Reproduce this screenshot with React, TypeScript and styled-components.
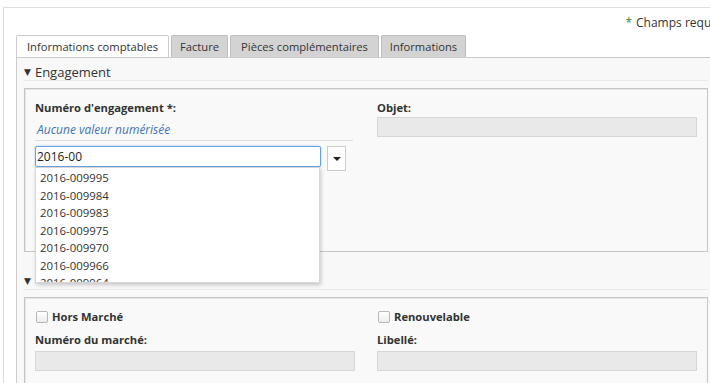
import styled, { createGlobalStyle } from 'styled-components';

const GlobalStyle = createGlobalStyle`
  html, body {
    margin: 0;
    padding: 0;
    background: #ffffff;
    overflow: hidden;
  }
  body {
    font-family: 'Open Sans', 'DejaVu Sans', sans-serif;
    color: #333333;
  }
`;

const Frame = styled.div`
  margin: 7px 0 0 3px;
  width: 740px;
  height: 376px;
  border-top: 1px solid #dddddd;
  border-left: 1px solid #dddddd;
  box-sizing: border-box;
  overflow: hidden;
`;

const TopBar = styled.div`
  height: 27px;
  display: flex;
  align-items: flex-end;
  justify-content: flex-end;
  padding-right: 23px;
  font-size: 12px;
  line-height: 25px;
`;

const Star = styled.span`
  color: #2e8b2e;
  margin-right: 4px;
`;

const TabBar = styled.div`
  display: flex;
  gap: 2px;
  padding-left: 12px;
  height: 22px;
  align-items: flex-end;
`;

const Tab = styled.div<{ active?: boolean; width: number }>`
  width: ${({ width }) => width}px;
  height: 22px;
  box-sizing: border-box;
  text-align: center;
  white-space: nowrap;
  font-size: 11.2px;
  line-height: 21px;
  color: #333333;
  border: 1px solid ${({ active }) => (active ? '#cccccc' : '#bdbdbd')};
  border-bottom: none;
  border-radius: 2px 2px 0 0;
  background: ${({ active }) => (active ? '#ffffff' : '#d3d3d3')};
`;

const Panel = styled.div`
  margin-left: 12px;
  border-top: 1px solid #cccccc;
  border-left: 1px solid #cccccc;
  background: #f8f8f8;
  padding: 0 0 0 7px;
  height: 340px;
`;

const SectionHeader = styled.div<{ spaced?: boolean }>`
  width: 684px;
  margin-top: ${({ spaced }) => (spaced ? '15px' : '0')};
  height: 23px;
  box-sizing: border-box;
  padding-top: 5px;
  display: flex;
  align-items: center;
  gap: 4px;
  font-size: 13px;
  color: #333333;
  border-bottom: 1px solid #e9e9e9;
`;

const Arrow = styled.span`
  font-size: 9px;
  color: #333333;
  line-height: 1;
`;

const Fieldset = styled.div<{ height: number }>`
  margin-top: 7px;
  width: 684px;
  height: ${({ height }) => height}px;
  box-sizing: border-box;
  border: 1px solid #c6c6c6;
  box-shadow: inset 1px 1px 0 #e6e6e6;
  background: #f9f9f9;
  padding: 11px 10px 0 10px;
  display: grid;
  grid-template-columns: 320px 320px;
  column-gap: 22px;
  align-content: start;
`;

const Column = styled.div`
  display: flex;
  flex-direction: column;
  position: relative;
`;

const Label = styled.div<{ gap?: number }>`
  margin-top: ${({ gap }) => gap ?? 0}px;
  font-size: 11.2px;
  font-weight: 700;
  line-height: 16px;
  color: #333333;
`;

const Note = styled.div`
  margin-top: 6px;
  width: 318px;
  padding: 0 0 2px 2px;
  box-sizing: border-box;
  font-size: 12px;
  font-style: italic;
  line-height: 16px;
  color: #3d74b8;
  border-bottom: 1px solid #dddddd;
`;

const InputRow = styled.div`
  margin-top: 5px;
  display: flex;
  align-items: flex-start;
  gap: 6px;
  position: relative;
`;

const TextInput = styled.div`
  width: 286px;
  height: 21px;
  box-sizing: border-box;
  border: 1px solid #6aa2e0;
  box-shadow: 0 0 2px #8fbcef;
  border-radius: 2px;
  background: #ffffff;
  font-size: 12px;
  line-height: 19px;
  padding-left: 1px;
  color: #222222;
`;

const DropButton = styled.div`
  width: 19px;
  height: 25px;
  box-sizing: border-box;
  border: 1px solid #cccccc;
  background: #ffffff;
  display: flex;
  align-items: center;
  justify-content: center;
`;

const Caret = styled.span`
  width: 0;
  height: 0;
  border-left: 4px solid transparent;
  border-right: 4px solid transparent;
  border-top: 4px solid #222222;
`;

const Suggestions = styled.ul`
  position: absolute;
  top: 21px;
  left: 0;
  width: 285px;
  height: 116px;
  margin: 0;
  padding: 1px 0 0 0;
  list-style: none;
  overflow: hidden;
  background: #ffffff;
  border: 1px solid #d6d6d6;
  box-shadow: 1px 2px 4px rgba(0, 0, 0, 0.2);
  box-sizing: border-box;
  z-index: 2;
`;

const Suggestion = styled.li`
  font-size: 11.4px;
  line-height: 17.5px;
  padding-left: 4px;
  color: #333333;
`;

const ReadOnly = styled.div<{ gap?: number }>`
  margin-top: ${({ gap }) => gap ?? 1}px;
  width: 320px;
  height: 20px;
  box-sizing: border-box;
  border: 1px solid #d6d6d6;
  background: #e9e9e9;
`;

const CheckRow = styled.label`
  display: flex;
  align-items: center;
  gap: 4px;
  font-size: 11.2px;
  font-weight: 700;
  line-height: 16px;
  margin-left: 1px;
`;

const Check = styled.span`
  width: 10px;
  height: 10px;
  border: 1px solid #b8b8b8;
  border-radius: 2px;
  background: linear-gradient(#ffffff, #ececec);
`;

const tabs = [
  { label: 'Informations comptables', width: 153 },
  { label: 'Facture', width: 57 },
  { label: 'Pièces complémentaires', width: 149 },
  { label: 'Informations', width: 85 },
];

const codes = [
  '2016-009995',
  '2016-009984',
  '2016-009983',
  '2016-009975',
  '2016-009970',
  '2016-009966',
  '2016-009964',
];

export default function App() {
  return (
    <>
      <GlobalStyle />
      <Frame>
        <TopBar>
          <Star>*</Star>Champs requis
        </TopBar>
        <TabBar>
          {tabs.map((t, i) => (
            <Tab key={t.label} width={t.width} active={i === 0}>
              {t.label}
            </Tab>
          ))}
        </TabBar>
        <Panel>
          <SectionHeader>
            <Arrow>▼</Arrow>Engagement
          </SectionHeader>
          <Fieldset height={164}>
            <Column>
              <Label>Numéro d'engagement *:</Label>
              <Note>Aucune valeur numérisée</Note>
              <InputRow>
                <TextInput>2016-00</TextInput>
                <DropButton>
                  <Caret />
                </DropButton>
                <Suggestions>
                  {codes.map((c) => (
                    <Suggestion key={c}>{c}</Suggestion>
                  ))}
                </Suggestions>
              </InputRow>
            </Column>
            <Column>
              <Label>Objet:</Label>
              <ReadOnly />
            </Column>
          </Fieldset>
          <SectionHeader spaced>
            <Arrow>▼</Arrow>
          </SectionHeader>
          <Fieldset height={120}>
            <Column>
              <CheckRow>
                <Check />
                Hors Marché
              </CheckRow>
              <Label gap={7}>Numéro du marché:</Label>
              <ReadOnly gap={3} />
            </Column>
            <Column>
              <CheckRow>
                <Check />
                Renouvelable
              </CheckRow>
              <Label gap={7}>Libellé:</Label>
              <ReadOnly gap={3} />
            </Column>
          </Fieldset>
        </Panel>
      </Frame>
    </>
  );
}
